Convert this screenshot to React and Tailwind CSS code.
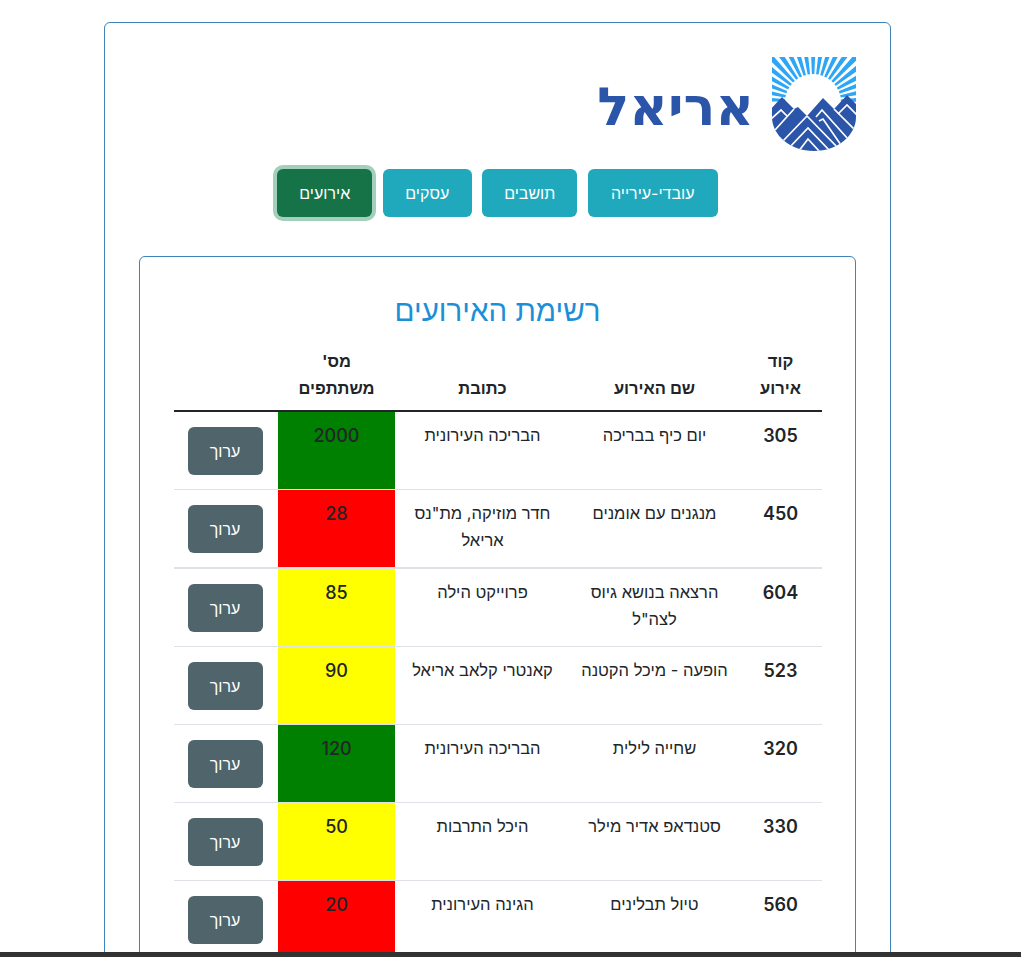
import React from "react";

const events = [
  { code: "305", name: "יום כיף בבריכה", place: "הבריכה העירונית", count: "2000", color: "bg-[#008000]" },
  { code: "450", name: "מנגנים עם אומנים", place: 'חדר מוזיקה, מת"נס אריאל', count: "28", color: "bg-[#ff0000]", thick: true },
  { code: "604", name: 'הרצאה בנושא גיוס לצה"ל', place: "פרוייקט הילה", count: "85", color: "bg-[#ffff00]" },
  { code: "523", name: "הופעה - מיכל הקטנה", place: "קאנטרי קלאב אריאל", count: "90", color: "bg-[#ffff00]" },
  { code: "320", name: "שחייה לילית", place: "הבריכה העירונית", count: "120", color: "bg-[#008000]" },
  { code: "330", name: "סטנדאפ אדיר מילר", place: "היכל התרבות", count: "50", color: "bg-[#ffff00]" },
  { code: "560", name: "טיול תבלינים", place: "הגינה העירונית", count: "20", color: "bg-[#ff0000]" },
];

// sun rays: wedges going out from the middle of the sun
const rays = Array.from({ length: 23 }, (_, i) => -188 + i * 8.7);

const point = (deg, r) => {
  const a = (deg * Math.PI) / 180;
  return `${41 + r * Math.cos(a)},${45 + r * Math.sin(a)}`;
};

const Logo = () => (
  <svg width="84" height="94" viewBox="0 0 84 94" className="shrink-0">
    <defs>
      <clipPath id="shield">
        <path d="M0 0H84V60C84 78 66 94 42 94C18 94 0 78 0 60Z" />
      </clipPath>
    </defs>
    <g clipPath="url(#shield)">
      {rays.map((a) => (
        <polygon key={a} points={`${point(a, 25)} ${point(a + 5, 25)} ${point(a + 5, 90)} ${point(a, 90)}`} fill="#2ea6f6" />
      ))}
      <circle cx="41" cy="45" r="28" fill="#fff" />
      <path d="M0 46H84V94H0Z" fill="#fff" />
      <path d="M-2 53L10 40L22 52L26 50L35 59L51 41L62 52L75 38L88 51V96H-2Z" fill="#2b55a8" />
      <g fill="none" stroke="#fff" strokeWidth="1.7">
        <path d="M-1 62L9 53L15 59" />
        <path d="M22 52L3 73" />
        <path d="M35 59L10 85" />
        <path d="M35 59L69 94" />
        <path d="M16 92L36 71L58 94" />
        <path d="M26 95L36 82L48 95" />
        <path d="M44 60L50 53L76 82" />
        <path d="M47 64L51 62L69 88" />
        <path d="M62 52L85 75" />
        <path d="M66 57L75 48L86 59" />
      </g>
    </g>
  </svg>
);

const NavButton = ({ children, active, width }) => (
  <button
    className={
      active
        ? `h-12 ${width} rounded-md bg-[#157347] text-white text-base ring-4 ring-[#a3cfbb]`
        : `h-12 ${width} rounded-md bg-[#20a9bd] text-white text-base`
    }
  >
    {children}
  </button>
);

const App = () => {
  return (
    <div
      dir="rtl"
      className="h-screen overflow-hidden bg-white text-[#212529] font-['Inter','Liberation_Sans',sans-serif]"
    >
      <div className="mr-[130px] mt-[22px] w-[787px] rounded-md border border-[#3f83b8] px-[34px] pt-[34px]">
        <div className="flex items-center gap-[18px] h-[94px]">
          <Logo />
          <span className="pt-1 text-[53px] leading-none font-bold text-[#2b55a8] font-['DejaVu_Sans',sans-serif]">
            אריאל
          </span>
        </div>
        <div className="mt-[18px] flex justify-center gap-[10.5px]">
          <NavButton width="w-[130px]">עובדי-עירייה</NavButton>
          <NavButton width="w-[95px]">תושבים</NavButton>
          <NavButton width="w-[89px]">עסקים</NavButton>
          <NavButton width="w-[95px]" active>אירועים</NavButton>
        </div>
        <div className="mt-[39px] rounded-md border border-[#3f83b8] px-[33px] pt-[35px]">
          <h1 className="text-center text-[29.5px] leading-9 text-[#1c8fd8]">רשימת האירועים</h1>
          <table className="mt-3 w-[648px] table-fixed border-collapse text-center text-[16.5px] leading-[27px]">
            <thead>
              <tr className="border-b-2 border-[#212529]">
                <th className="w-[83px] p-2 align-bottom font-bold">קוד אירוע</th>
                <th className="w-[169px] p-2 align-bottom font-bold">שם האירוע</th>
                <th className="w-[175px] p-2 align-bottom font-bold">כתובת</th>
                <th className="w-[117px] p-2 align-bottom font-bold">מס' משתתפים</th>
                <th className="w-[104px] p-2"></th>
              </tr>
            </thead>
            <tbody>
              {events.map((e) => (
                <tr
                  key={e.code}
                  className={e.thick ? "h-[79px] border-b-2 border-[#dee2e6]" : "h-[78px] border-b border-[#dee2e6]"}
                >
                  <th className="px-2 pt-[10px] align-top text-lg font-semibold">{e.code}</th>
                  <td className="px-2 pt-[10px] align-top">{e.name}</td>
                  <td className="px-2 pt-[10px] align-top">{e.place}</td>
                  <td className={`px-2 pt-[10px] align-top text-lg font-medium ${e.color}`}>{e.count}</td>
                  <td className="p-2 align-top">
                    <button className="mr-[2px] mt-[7px] h-12 w-[75px] rounded-md bg-[#4f646b] text-base text-white">ערוך</button>
                  </td>
                </tr>
              ))}
            </tbody>
          </table>
        </div>
      </div>
      <div className="fixed bottom-0 left-0 right-0 h-[5px] bg-[#333333]"></div>
    </div>
  );
};

export default App;
